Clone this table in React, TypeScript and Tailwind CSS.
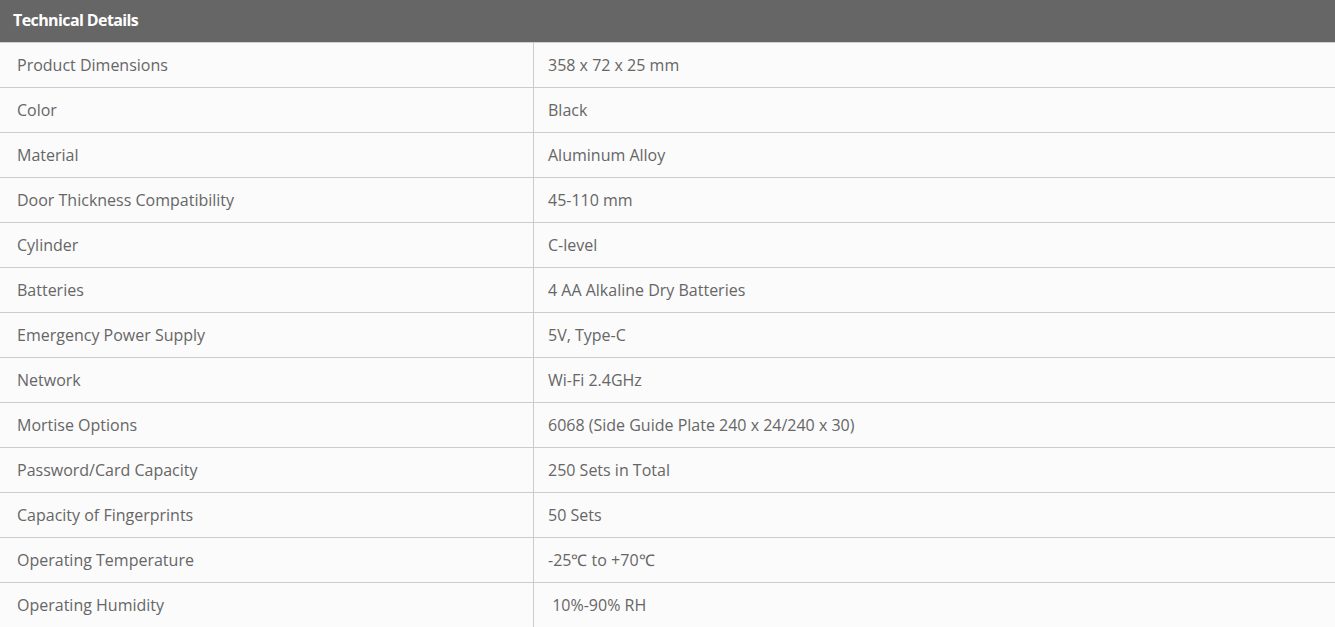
const rows: [string, string][] = [
  ["Product Dimensions", "358 x 72 x 25 mm"],
  ["Color", "Black"],
  ["Material", "Aluminum Alloy"],
  ["Door Thickness Compatibility", "45-110 mm"],
  ["Cylinder", "C-level"],
  ["Batteries", "4 AA Alkaline Dry Batteries"],
  ["Emergency Power Supply", "5V, Type-C"],
  ["Network", "Wi-Fi 2.4GHz"],
  ["Mortise Options", "6068 (Side Guide Plate 240 x 24/240 x 30)"],
  ["Password/Card Capacity", "250 Sets in Total"],
  ["Capacity of Fingerprints", "50 Sets"],
  ["Operating Temperature", "-25℃ to +70℃"],
  ["Operating Humidity", "\u00a010%-90% RH"],
];

export default function App() {
  return (
    <div className="min-h-screen bg-[#fbfbfb] font-['Open_Sans',sans-serif]">
      <div className="h-[43px] bg-[#666666] border-b border-[#d0d0d0] flex items-center px-[13px] pb-[2px]">
        <h2 className="text-[16px] font-bold text-white tracking-[-0.6px]">Technical Details</h2>
      </div>
      <div>
        {rows.map(([label, value]) => (
          <div
            key={label}
            className="grid grid-cols-[534px_1fr] h-[45px] border-b border-[#cccccc] text-[16px] text-[#666666]"
          >
            <div className="flex items-center pl-[17px] border-r border-[#cccccc]">{label}</div>
            <div className="flex items-center pl-[14px]">{value}</div>
          </div>
        ))}
      </div>
    </div>
  );
}
